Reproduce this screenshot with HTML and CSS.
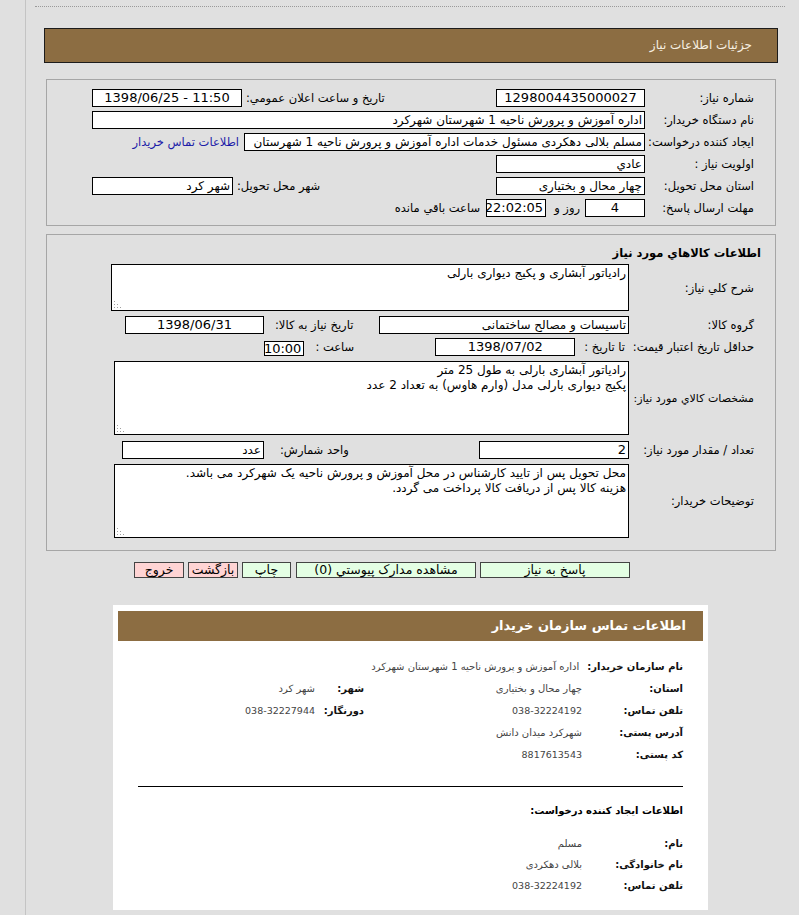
FILE: index.html
```html
<!DOCTYPE html>
<html lang="fa" dir="rtl">
<head>
<meta charset="utf-8">
<title>جزئیات اطلاعات نیاز</title>
<link rel="stylesheet" href="styles.css">
</head>
<body>
<div class="page">
  <div class="topline"></div>
  <div class="main">
    <div class="titlebar">جزئیات اطلاعات نیاز</div>

    <div class="panel p1">
      <div class="row">
        <div class="lbl">شماره نیاز:</div>
        <div class="fld w149 c num">1298004435000027</div>
        <div class="lgroup">
          <span class="sub">تاریخ و ساعت اعلان عمومي:</span>
          <div class="fld w150 c num" dir="ltr">1398/06/25 - 11:50</div>
        </div>
      </div>
      <div class="row">
        <div class="lbl">نام دستگاه خریدار:</div>
        <div class="fld grow">اداره آموزش و پرورش ناحیه 1 شهرستان شهرکرد</div>
      </div>
      <div class="row">
        <div class="lbl">ایجاد کننده درخواست:</div>
        <div class="fld w401">مسلم بلالی دهکردی مسئول خدمات اداره آموزش و پرورش ناحیه 1 شهرستان</div>
        <span class="link">اطلاعات تماس خریدار</span>
      </div>
      <div class="row">
        <div class="lbl">اولویت نیاز :</div>
        <div class="fld w149">عادي</div>
      </div>
      <div class="row">
        <div class="lbl">استان محل تحویل:</div>
        <div class="fld w149">چهار محال و بختیاری</div>
        <div class="lgroup">
          <span class="sub">شهر محل تحویل:</span>
          <div class="fld w141">شهر کرد</div>
        </div>
      </div>
      <div class="row">
        <div class="lbl">مهلت ارسال پاسخ:</div>
        <div class="fld w60 c num">4</div>
        <span class="txt days">روز و</span>
        <div class="fld w60 c num">22:02:05</div>
        <span class="txt remain">ساعت باقي مانده</span>
      </div>
    </div>

    <div class="panel p2">
      <div class="ptitle">اطلاعات کالاهاي مورد نیاز</div>
      <div class="row2 r-desc">
        <div class="lbl2">شرح کلي نیاز:</div>
        <div class="cell">
          <div class="area a1">رادیاتور آبشاری و پکیج دیواری بارلی<svg class="grip" width="8" height="8" viewBox="0 0 8 8"><rect x="0" y="1" width="1" height="1"/><rect x="0" y="4" width="1" height="1"/><rect x="0" y="7" width="1" height="1"/><rect x="3" y="4" width="1" height="1"/><rect x="3" y="7" width="1" height="1"/><rect x="6" y="7" width="1" height="1"/></svg></div>
        </div>
      </div>
      <div class="row2 r-group">
        <div class="lbl2">گروه کالا:</div>
        <div class="cell">
          <div class="fld w250">تاسیسات و مصالح ساختمانی</div>
          <div class="lgroup g2">
            <span class="sub">تاریخ نیاز به کالا:</span>
            <div class="fld w139 c num">1398/06/31</div>
          </div>
        </div>
      </div>
      <div class="row2 r-valid">
        <div class="lbl2">حداقل تاریخ اعتبار قیمت:</div>
        <div class="cell">
          <span class="txt until">تا تاریخ :</span>
          <div class="fld w140 c num">1398/07/02</div>
          <span class="txt hour">ساعت :</span>
          <div class="fld w40 c num small">10:00</div>
        </div>
      </div>
      <div class="row2 r-spec">
        <div class="lbl2 narrow">مشخصات کالاي مورد نیاز:</div>
        <div class="cell">
          <div class="area a2">رادیاتور آبشاری بارلی به طول 25 متر<br>پکیج دیواری بارلی مدل (وارم هاوس) به تعداد 2 عدد<svg class="grip" width="8" height="8" viewBox="0 0 8 8"><rect x="0" y="1" width="1" height="1"/><rect x="0" y="4" width="1" height="1"/><rect x="0" y="7" width="1" height="1"/><rect x="3" y="4" width="1" height="1"/><rect x="3" y="7" width="1" height="1"/><rect x="6" y="7" width="1" height="1"/></svg></div>
        </div>
      </div>
      <div class="row2 r-qty">
        <div class="lbl2">تعداد / مقدار مورد نیاز:</div>
        <div class="cell">
          <div class="fld w150 num">2</div>
          <div class="lgroup g3">
            <span class="sub">واحد شمارش:</span>
            <div class="fld w142">عدد</div>
          </div>
        </div>
      </div>
      <div class="row2 r-notes">
        <div class="lbl2">توضیحات خریدار:</div>
        <div class="cell">
          <div class="area a2">محل تحویل پس از تایید کارشناس در محل آموزش و پرورش ناحیه یک شهرکرد می باشد.<br>هزینه کالا پس از دریافت کالا پرداخت می گردد.<svg class="grip" width="8" height="8" viewBox="0 0 8 8"><rect x="0" y="1" width="1" height="1"/><rect x="0" y="4" width="1" height="1"/><rect x="0" y="7" width="1" height="1"/><rect x="3" y="4" width="1" height="1"/><rect x="3" y="7" width="1" height="1"/><rect x="6" y="7" width="1" height="1"/></svg></div>
        </div>
      </div>
    </div>

    <div class="buttons">
      <span class="btn green b150">پاسخ به نیاز</span>
      <span class="btn green b180">مشاهده مدارک پیوستي (0)</span>
      <span class="btn green b49">چاپ</span>
      <span class="btn pink b50">بازگشت</span>
      <span class="btn pink b50">خروج</span>
    </div>

    <div class="card">
      <div class="cardhead">اطلاعات تماس سازمان خریدار</div>
      <div class="cardbody">
        <div class="crow first">
          <span class="clbl">نام سازمان خریدار:</span>
          <span class="cval">اداره آموزش و پرورش ناحیه 1 شهرستان شهرکرد</span>
        </div>
        <div class="crow">
          <span class="clbl w">استان:</span>
          <span class="cval v">چهار محال و بختیاری</span>
          <span class="clbl w2">شهر:</span>
          <span class="cval">شهر کرد</span>
        </div>
        <div class="crow">
          <span class="clbl w">تلفن تماس:</span>
          <span class="cval v dig">038-32224192</span>
          <span class="clbl w2">دورنگار:</span>
          <span class="cval dig">038-32227944</span>
        </div>
        <div class="crow">
          <span class="clbl w">آدرس پستی:</span>
          <span class="cval v">شهرکرد میدان دانش</span>
        </div>
        <div class="crow">
          <span class="clbl w">کد پستی:</span>
          <span class="cval v dig">8817613543</span>
        </div>
        <div class="sep"></div>
        <div class="csub">اطلاعات ایجاد کننده درخواست:</div>
        <div class="crow tight">
          <span class="clbl w">نام:</span>
          <span class="cval v">مسلم</span>
        </div>
        <div class="crow tight">
          <span class="clbl w">نام خانوادگی:</span>
          <span class="cval v">بلالی دهکردی</span>
        </div>
        <div class="crow tight">
          <span class="clbl w">تلفن تماس:</span>
          <span class="cval v dig">038-32224192</span>
        </div>
      </div>
    </div>
  </div>
</div>
</body>
</html>
```

FILE: styles.css
```css
html, body {
  margin: 0;
  padding: 0;
}
body {
  background: #e0e0e0;
  font-family: "DejaVu Sans", "Noto Sans", sans-serif;
  font-size: 11.5px;
  color: #000;
  overflow: hidden;
}
.page {
  margin-left: 25px;
  border-left: 1px solid #c4c4c4;
  min-height: 915px;
  box-sizing: border-box;
  padding-top: 6px;
}
.topline {
  border-top: 1px dotted #9a9a9a;
  margin: 0 14px 0 9px;
}
.main {
  padding: 0 21px 0 18px;
}
.titlebar {
  margin-top: 21px;
  height: 33px;
  line-height: 33px;
  background: #8c6d42;
  border: 1px solid #1c1c1c;
  color: #f7f0e2;
  font-size: 12px;
  padding-right: 25px;
}
.panel {
  border: 1px solid #a6a6a6;
  margin: 16px 2px 0 2px;
}
.p1 {
  padding: 9px 0 8px 45px;
}
.row {
  display: flex;
  align-items: center;
  height: 18px;
}
.row + .row {
  margin-top: 4px;
}
.lbl {
  width: 130px;
  box-sizing: border-box;
  padding-right: 21px;
  white-space: nowrap;
  flex: none;
}
.fld {
  height: 18px;
  box-sizing: border-box;
  border: 1px solid #000;
  background: #fff;
  line-height: 16px;
  padding: 0 2px;
  white-space: nowrap;
  overflow: hidden;
  flex: none;
  font-size: 12px;
}
.fld.num { font-size: 13px; }
.c { text-align: center; }
.grow { flex: 1 1 auto; }
.w149 { width: 149px; }
.w150 { width: 150px; }
.w141 { width: 141px; }
.w401 { width: 401px; }
.w60 { width: 60px; }
.w250 { width: 250px; }
.w139 { width: 139px; }
.w140 { width: 140px; }
.w142 { width: 142px; }
.w40 { width: 40px; }
.small {
  height: 15px;
  line-height: 13px;
  align-self: flex-end;
}
.lgroup {
  display: flex;
  align-items: center;
  margin-right: auto;
}
.sub {
  white-space: nowrap;
  margin-left: 4px;
}
.link {
  color: #1c1ca8;
  margin-right: 5px;
  white-space: nowrap;
}
.txt { white-space: nowrap; }
.days { margin: 0 5px 0 8px; }
.remain { margin-right: 6px; }

.p2 {
  margin-top: 8px;
  padding: 0 0 12px 64px;
}
.ptitle {
  font-weight: bold;
  padding: 10px 14px 0 0;
  line-height: 16px;
  height: 16px;
}
.row2 {
  display: flex;
  align-items: center;
}
.lbl2 {
  width: 146px;
  box-sizing: border-box;
  padding-right: 21px;
  white-space: nowrap;
  flex: none;
}
.lbl2.narrow { font-size: 11px; }
.cell {
  width: 518px;
  display: flex;
  align-items: center;
}
.r-desc { margin-top: 3px; }
.r-group { margin-top: 5px; height: 18px; }
.r-valid { margin-top: 4px; height: 18px; }
.r-valid .cell { align-self: stretch; }
.r-spec { margin-top: 5px; }
.r-qty { margin-top: 6px; height: 18px; }
.r-notes { margin-top: 5px; }
.g2 { margin-left: 14px; }
.g3 { margin-left: 11px; }
.g2 .sub { margin-left: 11px; }
.g3 .sub { margin-left: 16px; }
.until { margin: 0 4px 0 9px; }
.hour { margin: 0 81px 0 11px; }
.area {
  position: relative;
  box-sizing: border-box;
  border: 1px solid #000;
  background: #fff;
  padding: 1px 2px;
  line-height: 15px;
  width: 518px;
  font-size: 12px;
}
.a1 { height: 47px; }
.a2 { height: 74px; width: 515px; margin-left: 3px; }
.grip {
  position: absolute;
  left: 2px;
  bottom: 2px;
  fill: #a0a0a0;
}

.buttons {
  display: flex;
  gap: 4px;
  margin: 11px 148px 0 0;
}
.btn {
  box-sizing: border-box;
  height: 16px;
  line-height: 14px;
  border: 1px solid #444;
  text-align: center;
  white-space: nowrap;
  font-size: 12.5px;
}
.green { background: #e4ffe4; }
.pink { background: #ffd4d4; }
.b150 { width: 150px; }
.b180 { width: 180px; margin-left: 1px; }
.b49 { width: 49px; }
.b50 { width: 50px; }

.card {
  background: #fff;
  margin: 27px 70px 0 69px;
  padding: 6px 5px 14px 5px;
}
.cardhead {
  background: #8c6d42;
  color: #fff;
  font-weight: bold;
  font-size: 13px;
  height: 30px;
  line-height: 30px;
  padding-right: 17px;
}
.cardbody {
  padding: 15px 20px 0 20px;
  font-size: 10px;
}
.crow {
  display: flex;
  align-items: center;
  height: 22px;
  line-height: 22px;
}
.crow.tight {
  height: 21px;
  line-height: 21px;
}
.clbl {
  font-weight: bold;
  font-size: 10px;
  color: #111;
  white-space: nowrap;
  flex: none;
}
.first .clbl { margin-left: 8px; }
.clbl.w { width: 101px; }
.clbl.w2 { width: 49px; }
.cval {
  color: #444;
  white-space: nowrap;
}
.cval.dig { font-size: 9.5px; }
.cval.v { width: 218px; flex: none; }
.sep {
  border-top: 1px solid #000;
  margin-top: 20px;
}
.csub {
  font-weight: bold;
  font-size: 10px;
  margin-top: 13px;
  height: 22px;
  line-height: 22px;
  margin-bottom: 11px;
}
```
